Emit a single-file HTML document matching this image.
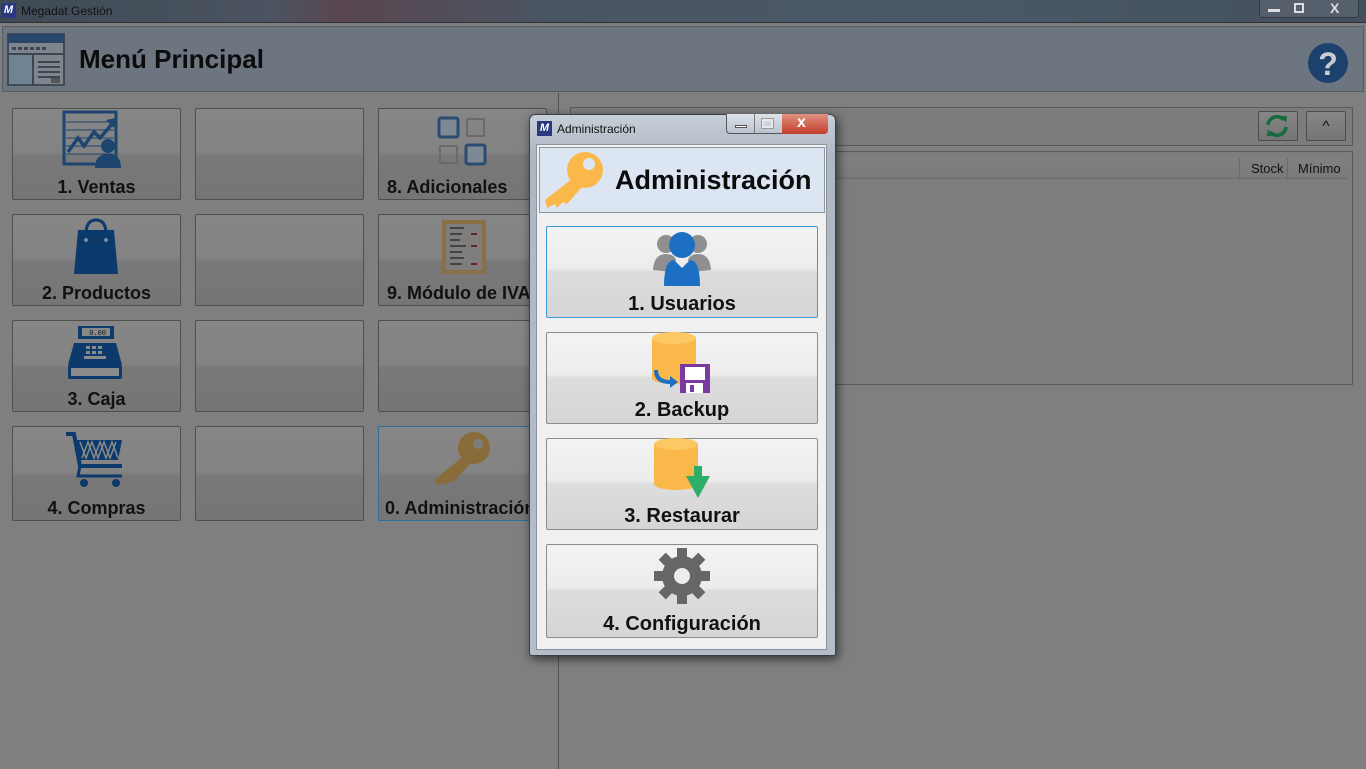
<!DOCTYPE html>
<html><head><meta charset="utf-8">
<style>
*{margin:0;padding:0;box-sizing:border-box}
body{width:1366px;height:769px;background:#7f7f7f;position:relative;overflow:hidden;font-family:"Liberation Sans",sans-serif}
.abs{position:absolute}
.tile{position:absolute;width:169px;border:1px solid #4e4e4e;border-radius:2px;background:linear-gradient(#868686 0,#838383 48%,#797979 52%,#757575 100%);overflow:hidden}
.tile .lb{position:absolute;left:0;right:0;bottom:1px;text-align:center;font-weight:bold;font-size:18px;color:#111;white-space:nowrap}
.btn{position:absolute;left:546px;width:272px;height:92px;border:1px solid #8c8c8c;border-radius:2px;background:linear-gradient(#f3f3f3 0,#ececec 46%,#dddddd 50%,#d5d5d5 100%)}
.btn .lb{position:absolute;left:0;right:0;bottom:1px;text-align:center;font-weight:bold;font-size:20px;color:#111}
</style></head><body>
<!-- titlebar -->
<div class="abs" style="left:0;top:0;width:1366px;height:23px;background:linear-gradient(90deg,#3f4a55,#4b5460 20%,#5a4650 25%,#4a5562 40%,#4a5868 70%,#44505c);border-bottom:1px solid #2a2f35"></div>
<div class="abs" style="left:1px;top:3px;width:15px;height:15px;background:#2b3a80;color:#fff;font-size:11px;font-weight:bold;font-style:italic;text-align:center;line-height:15px">M</div>
<div class="abs" style="left:21px;top:4px;font-size:12px;color:#111">Megadat Gestión</div>
<div class="abs" style="left:1259px;top:0;width:100px;height:18px;border:1px solid #333a42;border-top:none;border-radius:0 0 4px 4px;background:#55606c"></div>
<div class="abs" style="left:1268px;top:9px;width:12px;height:3px;background:#ddd"></div>
<div class="abs" style="left:1294px;top:3px;width:10px;height:10px;border:2px solid #ddd"></div>
<div class="abs" style="left:1330px;top:0;font-size:14px;color:#ddd;font-weight:bold">X</div>
<!-- header -->
<div class="abs" style="left:2px;top:26px;width:1362px;height:66px;background:#6d7580;border:1px solid #555b62"></div>
<svg class="abs" style="left:7px;top:33px" width="58" height="53" viewBox="0 0 58 53">
<rect x="1" y="1" width="56" height="51" fill="#7e858c" stroke="#3d4a58" stroke-width="2"/>
<rect x="1" y="1" width="56" height="9" fill="#29476b"/>
<g fill="#3d4550"><rect x="5" y="14" width="4" height="3"/><rect x="11" y="14" width="4" height="3"/><rect x="17" y="14" width="4" height="3"/><rect x="23" y="14" width="4" height="3"/><rect x="29" y="14" width="4" height="3"/><rect x="35" y="14" width="4" height="3"/></g>
<rect x="1" y="20" width="56" height="2" fill="#3d4550"/>
<rect x="2" y="22" width="23" height="29" fill="#6f8393"/><rect x="25" y="22" width="2" height="30" fill="#3d4550"/>
<g fill="#3d4550"><rect x="31" y="28" width="22" height="2"/><rect x="31" y="33" width="22" height="2"/><rect x="31" y="38" width="22" height="2"/><rect x="31" y="43" width="22" height="2"/><rect x="44" y="45" width="9" height="5" fill="#555"/></g>
</svg>
<div class="abs" style="left:79px;top:44px;font-size:26px;font-weight:bold;color:#0c0c0c">Menú Principal</div>
<svg class="abs" style="left:1307px;top:42px" width="42" height="42"><circle cx="21" cy="21" r="20" fill="#1c416d"/><text x="21" y="33" text-anchor="middle" font-family="Liberation Sans" font-weight="bold" font-size="32" fill="#c9cdd2">?</text></svg>
<!-- divider -->
<div class="abs" style="left:558px;top:93px;width:1px;height:676px;background:#555"></div>
<!-- right toolbar & grid -->
<div class="abs" style="left:570px;top:107px;width:783px;height:39px;border:1px solid #5a5a5a;background:#7c7c7c"></div>
<div class="abs" style="left:1258px;top:111px;width:40px;height:30px;border:1px solid #4c4c4c;border-radius:2px;background:linear-gradient(#878787,#747474)"></div>
<svg class="abs" style="left:1264px;top:113px" width="26" height="26" viewBox="0 0 26 26"><path d="M4 12 A9 9 0 0 1 20 7" fill="none" stroke="#156b3d" stroke-width="3.5"/><path d="M17 3 L23 3 L22 10 Z" fill="#156b3d"/><path d="M22 14 A9 9 0 0 1 6 19" fill="none" stroke="#156b3d" stroke-width="3.5"/><path d="M9 23 L3 23 L4 16 Z" fill="#156b3d"/></svg>
<div class="abs" style="left:1306px;top:111px;width:40px;height:30px;border:1px solid #4c4c4c;border-radius:2px;background:linear-gradient(#878787,#747474);text-align:center;font-size:15px;line-height:30px;color:#111">^</div>
<div class="abs" style="left:570px;top:151px;width:783px;height:234px;border:1px solid #5a5a5a;background:#7d7d7d"></div>
<div class="abs" style="left:571px;top:158px;width:776px;height:21px;border-bottom:1px solid #6a6a6a;background:linear-gradient(#808080,#7a7a7a)"></div>
<div class="abs" style="left:1239px;top:158px;width:1px;height:21px;background:#6a6a6a"></div>
<div class="abs" style="left:1287px;top:158px;width:1px;height:21px;background:#6a6a6a"></div>
<div class="abs" style="left:1251px;top:161px;font-size:13px;color:#111">Stock</div>
<div class="abs" style="left:1298px;top:161px;font-size:13px;color:#111">Mínimo</div>
<!-- tiles -->
<div class="tile" style="left:12px;top:108px;height:92px"><div class="lb">1. Ventas</div></div>
<div class="tile" style="left:195px;top:108px;height:92px"></div>
<div class="tile" style="left:378px;top:108px;height:92px"><div class="lb" style="left:8px;right:auto">8. Adicionales</div></div>
<div class="tile" style="left:12px;top:214px;height:92px"><div class="lb">2. Productos</div></div>
<div class="tile" style="left:195px;top:214px;height:92px"></div>
<div class="tile" style="left:378px;top:214px;height:92px"><div class="lb" style="left:8px;right:auto">9. Módulo de IVA</div></div>
<div class="tile" style="left:12px;top:320px;height:92px"><div class="lb">3. Caja</div></div>
<div class="tile" style="left:195px;top:320px;height:92px"></div>
<div class="tile" style="left:378px;top:320px;height:92px"></div>
<div class="tile" style="left:12px;top:426px;height:95px"><div class="lb">4. Compras</div></div>
<div class="tile" style="left:195px;top:426px;height:95px"></div>
<div class="tile" style="left:378px;top:426px;height:95px;border-color:#2f6f99"><div class="lb" style="left:6px;right:auto">0. Administración</div></div>
<!-- tile icons -->
<svg class="abs" style="left:62px;top:110px" width="64" height="60" viewBox="0 0 64 60"><rect x="2" y="2" width="52" height="52" fill="none" stroke="#1d4570" stroke-width="3"/><g stroke="#1d4570" stroke-width="1"><line x1="4" y1="12" x2="52" y2="12"/><line x1="4" y1="20" x2="52" y2="20"/><line x1="4" y1="28" x2="52" y2="28"/><line x1="4" y1="36" x2="52" y2="36"/><line x1="4" y1="44" x2="52" y2="44"/></g><path d="M6 42 L16 28 L22 36 L32 22 L38 28 L50 14" fill="none" stroke="#1d4570" stroke-width="3.5"/><path d="M44 10 L54 8 L52 18Z" fill="#1d4570"/><circle cx="46" cy="36" r="7" fill="#1d4570"/><path d="M33 58 Q33 44 46 44 Q59 44 59 58Z" fill="#1d4570"/></svg>
<svg class="abs" style="left:72px;top:218px" width="48" height="58" viewBox="0 0 48 58"><path d="M14 16 Q14 2 24 2 Q34 2 34 16" fill="none" stroke="#0c3a6c" stroke-width="3"/><path d="M6 12 L42 12 L46 56 L2 56Z" fill="#0c3a6c"/><circle cx="14" cy="22" r="2" fill="#7a8a9a"/><circle cx="34" cy="22" r="2" fill="#7a8a9a"/></svg>
<svg class="abs" style="left:66px;top:325px" width="58" height="55" viewBox="0 0 58 55"><rect x="12" y="1" width="36" height="13" fill="#0c3a6c"/><rect x="16" y="3" width="28" height="8" fill="#8a8a8a"/><text x="40" y="10" text-anchor="end" font-size="7" font-family="Liberation Mono" fill="#111">0.00</text><path d="M8 18 L50 18 L56 40 L2 40Z" fill="#0c3a6c"/><g fill="#8a8a8a"><rect x="20" y="21" width="4" height="3"/><rect x="26" y="21" width="4" height="3"/><rect x="32" y="21" width="4" height="3"/><rect x="20" y="26" width="4" height="3"/><rect x="26" y="26" width="4" height="3"/><rect x="32" y="26" width="4" height="3"/><rect x="18" y="31" width="22" height="3"/></g><rect x="2" y="40" width="54" height="14" rx="2" fill="#0c3a6c"/><rect x="5" y="43" width="48" height="8" fill="#8a8a8a"/></svg>
<svg class="abs" style="left:64px;top:430px" width="62" height="58" viewBox="0 0 62 58"><path d="M2 4 L10 4 L16 36 L58 36" fill="none" stroke="#0c3a6c" stroke-width="4"/><path d="M12 10 L58 10 L54 30 L16 30Z" fill="#0c3a6c"/><g stroke="#8a8a8a" stroke-width="1.5" fill="none"><path d="M16 12 L22 28 L28 12 L34 28 L40 12 L46 28 L52 12"/><path d="M18 28 L24 12 L30 28 L36 12 L42 28 L48 12 L54 28"/></g><circle cx="20" cy="53" r="4" fill="#0c3a6c"/><circle cx="52" cy="53" r="4" fill="#0c3a6c"/><path d="M16 36 L14 46 L58 46" fill="none" stroke="#0c3a6c" stroke-width="3"/></svg>
<svg class="abs" style="left:437px;top:116px" width="52" height="50" viewBox="0 0 52 50"><rect x="2" y="2" width="19" height="19" rx="2" fill="#7d8a96" stroke="#2a4c72" stroke-width="3"/><rect x="30" y="3" width="17" height="17" rx="1" fill="none" stroke="#6a6a6a" stroke-width="2"/><rect x="3" y="30" width="17" height="17" rx="1" fill="none" stroke="#6a6a6a" stroke-width="2"/><rect x="29" y="29" width="19" height="19" rx="2" fill="#7d8a96" stroke="#2a4c72" stroke-width="3"/></svg>
<svg class="abs" style="left:440px;top:218px" width="48" height="58" viewBox="0 0 48 58"><rect x="2" y="2" width="44" height="54" fill="#8b7047"/><rect x="6" y="6" width="36" height="46" fill="#7e7e7e"/><g fill="#444"><rect x="10" y="9" width="14" height="2"/><rect x="10" y="15" width="12" height="2"/><rect x="10" y="21" width="10" height="2"/><rect x="10" y="27" width="16" height="2"/><rect x="10" y="33" width="12" height="2"/><rect x="10" y="39" width="14" height="2"/><rect x="10" y="45" width="12" height="2"/></g><g fill="#6a2020"><rect x="31" y="15" width="6" height="2"/><rect x="31" y="27" width="6" height="2"/><rect x="31" y="45" width="6" height="2"/></g></svg>
<svg class="abs" style="left:432px;top:430px" width="62" height="58" viewBox="0 0 62 58"><circle cx="42" cy="18" r="16" fill="#8a6c3b"/><circle cx="46" cy="14" r="5" fill="#7d7d7d"/><path d="M32 26 L2 50 L6 56 L12 52 L14 55 L18 51 L20 53 L38 34Z" fill="#8a6c3b"/></svg>
<!-- dialog -->
<div class="abs" style="left:529px;top:114px;width:307px;height:542px;border:1px solid #3a4048;border-radius:6px 6px 3px 3px;background:linear-gradient(#c7cfd8,#aeb8c3 40px,#b5bec8);box-shadow:2px 3px 10px rgba(0,0,0,.6)"></div>
<div class="abs" style="left:537px;top:121px;width:15px;height:15px;background:#2b3a80;color:#fff;font-size:11px;font-weight:bold;font-style:italic;text-align:center;line-height:15px">M</div>
<div class="abs" style="left:557px;top:122px;font-size:12px;color:#111">Administración</div>
<div class="abs" style="left:726px;top:114px;width:102px;height:20px;border:1px solid #555;border-top:none;border-radius:0 0 4px 4px;background:linear-gradient(#dde3ea,#b9c3cf)"></div>
<div class="abs" style="left:782px;top:114px;width:46px;height:20px;border-radius:0 0 4px 0;background:linear-gradient(#e09080,#c33f2b)"></div>
<div class="abs" style="left:754px;top:114px;width:1px;height:20px;background:#777"></div>
<div class="abs" style="left:735px;top:125px;width:12px;height:3px;background:#fff;border:1px solid #555"></div>
<div class="abs" style="left:762px;top:119px;width:11px;height:9px;border:2px solid #e8e8e8;outline:1px solid #999"></div>
<div class="abs" style="left:797px;top:114px;font-size:16px;color:#fff;font-weight:bold">x</div>
<div class="abs" style="left:536px;top:144px;width:291px;height:506px;background:#f0f0f0;border:1px solid #8a939c"></div>
<div class="abs" style="left:539px;top:147px;width:286px;height:66px;background:#dce6f2;border:1px solid #8e959c"></div>
<svg class="abs" style="left:543px;top:150px" width="62" height="60" viewBox="0 0 62 60"><circle cx="42" cy="20" r="18" fill="#fbb84a"/><circle cx="46" cy="14" r="6" fill="#dce6f2"/><path d="M30 28 L2 50 L4 58 L12 54 L14 58 L20 52 L24 54 L40 36Z" fill="#fbb84a"/></svg>
<div class="abs" style="left:615px;top:165px;font-size:27px;font-weight:bold;color:#0c0c0c">Administración</div>
<div class="btn" style="top:226px;border-color:#3c9ad6"><div class="lb">1. Usuarios</div></div>
<div class="btn" style="top:332px"><div class="lb">2. Backup</div></div>
<div class="btn" style="top:438px"><div class="lb">3. Restaurar</div></div>
<div class="btn" style="top:544px;height:94px"><div class="lb">4. Configuración</div></div>
<svg class="abs" style="left:652px;top:230px" width="60" height="58" viewBox="0 0 60 58"><circle cx="14" cy="14" r="9" fill="#8f8f8f"/><circle cx="46" cy="14" r="9" fill="#8f8f8f"/><path d="M1 40 Q2 24 14 24 Q22 24 24 30 L20 42Z" fill="#8f8f8f"/><path d="M59 40 Q58 24 46 24 Q38 24 36 30 L40 42Z" fill="#8f8f8f"/><circle cx="30" cy="15" r="13" fill="#1d6fc4"/><path d="M12 56 Q12 30 22 30 L30 38 L38 30 Q48 30 48 56Z" fill="#1d6fc4"/></svg>
<svg class="abs" style="left:650px;top:332px" width="62" height="62" viewBox="0 0 62 62"><rect x="2" y="6" width="44" height="40" fill="#fbb84a"/><ellipse cx="24" cy="46" rx="22" ry="6" fill="#fbb84a"/><ellipse cx="24" cy="6" rx="22" ry="6" fill="#fcc864"/><path d="M6 38 Q6 50 20 50" fill="none" stroke="#1d6fc4" stroke-width="4"/><path d="M20 44 L28 50 L20 56Z" fill="#1d6fc4"/><rect x="30" y="32" width="30" height="29" fill="#7a3aa0"/><rect x="35" y="35" width="20" height="13" fill="#fff"/><rect x="36" y="51" width="17" height="10" fill="#fff"/><rect x="40" y="53" width="4" height="7" fill="#7a3aa0"/></svg>
<svg class="abs" style="left:652px;top:438px" width="62" height="62" viewBox="0 0 62 62"><rect x="2" y="6" width="44" height="40" fill="#fbb84a"/><ellipse cx="24" cy="46" rx="22" ry="6" fill="#fbb84a"/><ellipse cx="24" cy="6" rx="22" ry="6" fill="#fcc864"/><rect x="42" y="28" width="8" height="14" fill="#2dae6b"/><path d="M34 38 L58 38 L46 60Z" fill="#2dae6b"/></svg>
<svg class="abs" style="left:653px;top:547px" width="58" height="58" viewBox="-29 -29 58 58"><g fill="#666"><circle r="20"/><g id="t"><rect x="-5" y="-28" width="10" height="12"/></g><use href="#t" transform="rotate(45)"/><use href="#t" transform="rotate(90)"/><use href="#t" transform="rotate(135)"/><use href="#t" transform="rotate(180)"/><use href="#t" transform="rotate(225)"/><use href="#t" transform="rotate(270)"/><use href="#t" transform="rotate(315)"/></g><circle r="8" fill="#ececec"/></svg>
</body></html>
